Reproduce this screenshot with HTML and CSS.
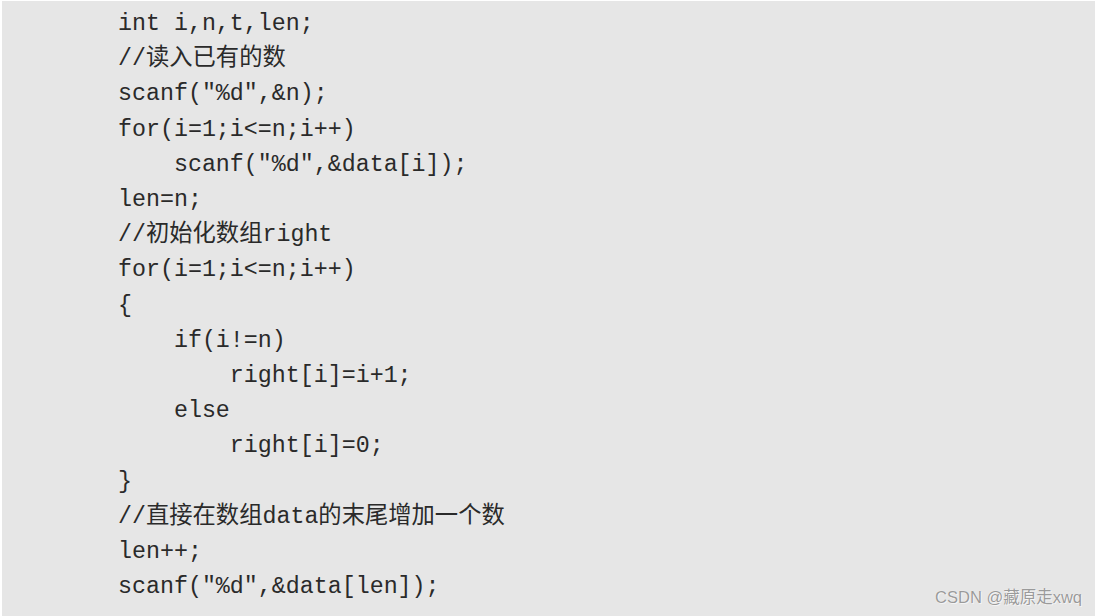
FILE: index.html
```html
<!DOCTYPE html>
<html lang="zh">
<head>
<meta charset="utf-8">
<link rel="stylesheet" href="styles.css">
</head>
<body>
<div class="shot">
<pre class="code">int i,n,t,len;
//读入已有的数
scanf("%d",&amp;n);
for(i=1;i&lt;=n;i++)
    scanf("%d",&amp;data[i]);
len=n;
//初始化数组right
for(i=1;i&lt;=n;i++)
{
    if(i!=n)
        right[i]=i+1;
    else
        right[i]=0;
}
//直接在数组data的末尾增加一个数
len++;
scanf("%d",&amp;data[len]);</pre>
<div class="mark">CSDN @藏原走xwq</div>
</div>
</body>
</html>
```

FILE: styles.css
```css
html, body {
  margin: 0;
  padding: 0;
  background: #ffffff;
}
.shot {
  position: relative;
  margin: 1px 2px 0 2px;
  width: 1093px;
  height: 615px;
  background: #e6e6e6;
  overflow: hidden;
}
.code {
  margin: 0;
  padding: 6px 0 0 116px;
  font-family: "Liberation Mono", "Noto Sans CJK SC", monospace;
  font-size: 23.3px;
  line-height: 35.2px;
  color: #2a2a2a;
}
.mark {
  position: absolute;
  right: 13px;
  bottom: 8px;
  font-family: "Liberation Sans", "Noto Sans CJK SC", sans-serif;
  font-size: 16.5px;
  color: #9a9a9a;
  text-shadow: 0 0 1px #ffffff, 1px 1px 0 #f4f4f4;
}
```
